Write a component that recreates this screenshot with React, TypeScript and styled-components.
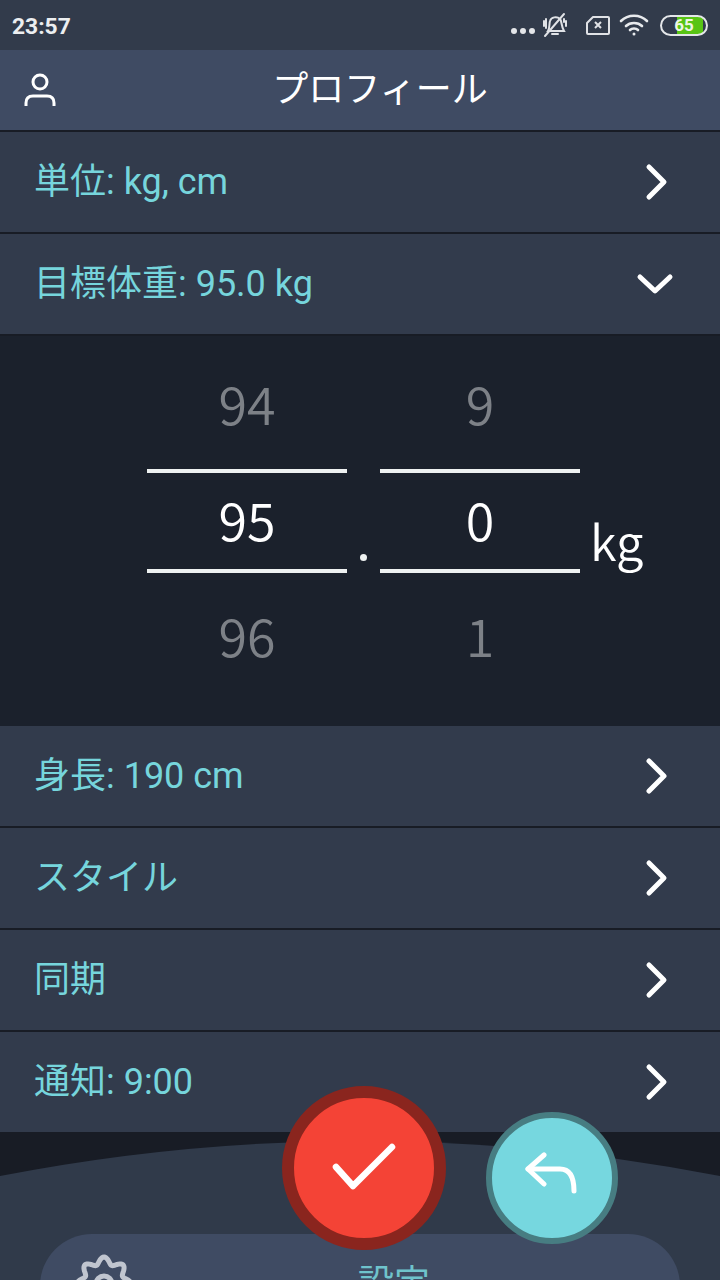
import React from 'react';
import styled, { createGlobalStyle } from 'styled-components';

const GlobalStyle = createGlobalStyle`
  html, body {
    margin: 0;
    padding: 0;
    background: #181c25;
  }
  * { box-sizing: border-box; }
`;

const Page = styled.div`
  width: 720px;
  height: 1280px;
  overflow: hidden;
  display: flex;
  flex-direction: column;
  background: #181c25;
  font-family: 'Noto Sans CJK JP', 'Noto Sans', sans-serif;
`;

const StatusBar = styled.div`
  height: 50px;
  background: #323b4b;
  display: flex;
  align-items: center;
  justify-content: space-between;
  padding: 0 12px;
`;

const Clock = styled.span`
  font: 700 22.8px 'Roboto', sans-serif;
  color: #eceef0;
  padding-top: 2px;
`;

const StatusIcons = styled.div`
  display: flex;
  align-items: center;
  gap: 7px;
`;

const Dots = styled.div`
  display: flex;
  gap: 3px;
  margin-top: 11px;
  i {
    width: 6px;
    height: 6px;
    border-radius: 50%;
    background: #e4e6e9;
  }
`;

const Battery = styled.div`
  width: 48px;
  height: 21px;
  margin-left: 4px;
  border: 2px solid #e4e6e9;
  border-radius: 11px;
  overflow: hidden;
  display: flex;
  align-items: center;
  justify-content: center;
  font: 700 17px 'Roboto', sans-serif;
  color: #eef5e6;
  background: linear-gradient(90deg, transparent 0 15px, #58c414 15px 41px, transparent 41px);
`;

const Header = styled.header`
  height: 82px;
  background: #3f4b63;
  border-bottom: 2px solid #181c25;
  display: flex;
  align-items: center;
  justify-content: center;
  position: relative;
`;

const Title = styled.h1`
  margin: 0;
  padding: 0 0 8px 40px;
  font-size: 36px;
  font-weight: 400;
  color: #fff;
`;

const ProfileButton = styled.div`
  position: absolute;
  left: 24px;
  top: 22px;
  display: flex;
`;

const Row = styled.div`
  height: 102px;
  background: #323b4c;
  border-bottom: 2px solid #181c25;
  display: flex;
  align-items: center;
  justify-content: space-between;
  padding: 0 46px 0 34px;

  &:last-of-type {
    height: 100px;
    border-bottom: 0;
  }
`;

const RowLabel = styled.span`
  padding-bottom: 8px;
  font-family: 'Roboto', 'Noto Sans CJK JP', sans-serif;
  font-size: 36px;
  font-weight: 400;
  color: #76d5dc;
`;

const Picker = styled.div`
  height: 390px;
  background: #1b212c;
  display: flex;
  padding-left: 147px;
`;

const Wheel = styled.div`
  width: 200px;
  display: flex;
  flex-direction: column;
  padding-top: 17px;
`;

const WheelItem = styled.div<{ $active?: boolean }>`
  height: ${(p) => (p.$active ? 104 : 116)}px;
  display: flex;
  align-items: center;
  justify-content: center;
  font-size: 52px;
  font-weight: 350;
  color: ${(p) => (p.$active ? '#fff' : '#7d8187')};
  border-style: solid;
  border-color: #eef1f1;
  border-width: ${(p) => (p.$active ? '4px 0' : 0)};
  padding-bottom: ${(p) => (p.$active ? 6 : 0)}px;

  &:first-child {
    padding-bottom: 18px;
  }
  &:last-child {
    padding-top: 6px;
  }
`;

const Separator = styled.div`
  width: 33px;
  display: flex;
  justify-content: center;
  padding-top: 218px;
  i {
    width: 7px;
    height: 7px;
    border-radius: 50%;
    background: #eef1f1;
  }
`;

const Unit = styled.div`
  margin-left: 10px;
  padding-top: 168px;
  font-size: 49px;
  font-weight: 350;
  line-height: 72px;
  color: #fff;
`;

const Bottom = styled.section`
  position: relative;
  flex: 1;
`;

const Arc = styled.svg`
  position: absolute;
  left: 0;
  top: 0;
`;

const NavCard = styled.nav`
  position: absolute;
  left: 40px;
  top: 102px;
  width: 640px;
  height: 120px;
  background: #3f4b63;
  border-radius: 52px 52px 0 0;
`;

const NavIcon = styled.div`
  position: absolute;
  left: 34px;
  top: 20px;
  display: flex;
`;

const NavLabel = styled.span`
  position: absolute;
  left: 318px;
  top: 20px;
  font-size: 36px;
  line-height: 52px;
  color: #6fc3cc;
`;

const RoundButton = styled.button<{ $size: number; $ring: number; $fill: string; $edge: string; $left: number; $top: number }>`
  position: absolute;
  left: ${(p) => p.$left}px;
  top: ${(p) => p.$top}px;
  width: ${(p) => p.$size}px;
  height: ${(p) => p.$size}px;
  padding: 0;
  border-radius: 50%;
  border: ${(p) => p.$ring}px solid ${(p) => p.$edge};
  background: ${(p) => p.$fill};
  display: flex;
  align-items: center;
  justify-content: center;
`;

const ChevronRight = styled.svg`
  margin-right: 6px;
`;

const Chevron = ({ down }: { down?: boolean }) =>
  down ? (
    <svg width="38" height="24" viewBox="0 0 38 24" fill="none" stroke="#fff" strokeWidth="5" strokeLinecap="round" strokeLinejoin="round">
      <path d="M4 5 L19 19 L34 5" />
    </svg>
  ) : (
    <ChevronRight width="24" height="38" viewBox="0 0 24 38" fill="none" stroke="#fff" strokeWidth="5" strokeLinecap="round" strokeLinejoin="round">
      <path d="M5 4 L20 19 L5 34" />
    </ChevronRight>
  );

// 8-lobed gear outline, r = R + a*cos(8t)
const gearPath = (() => {
  const pts: string[] = [];
  for (let i = 0; i < 160; i++) {
    const t = (i / 160) * Math.PI * 2;
    const r = 23.5 + 3.5 * Math.cos(8 * t);
    const x = 30 + r * Math.sin(t);
    const y = 30 - r * Math.cos(t);
    pts.push(`${x.toFixed(2)} ${y.toFixed(2)}`);
  }
  return `M${pts.join(' L')} Z`;
})();

const rowsTop = ['単位: kg, cm', '目標体重: 95.0 kg'];
const rowsBottom = ['身長: 190 cm', 'スタイル', '同期', '通知: 9:00'];

export default function App() {
  return (
    <Page>
      <GlobalStyle />
      <StatusBar>
        <Clock>23:57</Clock>
        <StatusIcons>
          <Dots><i /><i /><i /></Dots>
          <svg width="26" height="26" viewBox="0 0 26 26" fill="none" stroke="#e0e2e6" strokeWidth="2" strokeLinecap="round">
            <path d="M6 19 C8 16 7 12 8 9 C9 5 15 4 18 7 C20 9 19 14 22 19 Z" />
            <path d="M10 22 H16" />
            <path d="M3 24 L22 2" />
            <path d="M2 9 V14 M4 7 V16 M24 9 V14 M22 7 V10" />
          </svg>
          <svg width="24" height="19" viewBox="0 0 24 19" fill="none" stroke="#e0e2e6" strokeWidth="2" strokeLinejoin="round" style={{ marginLeft: 11 }}>
            <path d="M7 1 H22 Q23 1 23 2 V17 Q23 18 22 18 H2 Q1 18 1 17 V7 Z" />
            <path d="M9 6 L15 12 M15 6 L9 12" />
          </svg>
          <svg width="30" height="22" viewBox="0 0 30 22" fill="none" stroke="#e8eaed" strokeWidth="2.6" strokeLinecap="round" style={{ marginLeft: 2 }}>
            <path d="M2 7 C9 0 21 0 28 7" />
            <path d="M7 12 C11 8 19 8 23 12" />
            <path d="M11 16 C13 14 17 14 19 16" />
            <circle cx="15" cy="20" r="1.5" fill="#e8eaed" stroke="none" />
          </svg>
          <Battery>65</Battery>
        </StatusIcons>
      </StatusBar>

      <Header>
        <ProfileButton>
          <svg width="32" height="36" viewBox="0 0 32 36" fill="none" stroke="#fff" strokeWidth="3">
            <circle cx="16" cy="10" r="7" />
            <path d="M2 34 V31 C2 26 5 24 9 24 H23 C27 24 30 26 30 31 V34" />
          </svg>
        </ProfileButton>
        <Title>プロフィール</Title>
      </Header>

      {rowsTop.map((label, i) => (
        <Row key={label}>
          <RowLabel>{label}</RowLabel>
          <Chevron down={i === 1} />
        </Row>
      ))}

      <Picker>
        <Wheel>
          <WheelItem>94</WheelItem>
          <WheelItem $active>95</WheelItem>
          <WheelItem>96</WheelItem>
        </Wheel>
        <Separator><i /></Separator>
        <Wheel>
          <WheelItem>9</WheelItem>
          <WheelItem $active>0</WheelItem>
          <WheelItem>1</WheelItem>
        </Wheel>
        <Unit>kg</Unit>
      </Picker>

      {rowsBottom.map((label) => (
        <Row key={label}>
          <RowLabel>{label}</RowLabel>
          <Chevron />
        </Row>
      ))}

      <Bottom>
        <Arc width="720" height="148" viewBox="0 0 720 148">
          <path d="M0 44 Q360 -26 720 44 V148 H0 Z" fill="#303a4a" />
        </Arc>
        <NavCard>
          <NavIcon>
            <svg width="60" height="60" viewBox="0 0 60 60" fill="none" stroke="#c0c5cf" strokeWidth="5">
              <path d={gearPath} />
              <circle cx="30" cy="30" r="8" />
            </svg>
          </NavIcon>
          <NavLabel>設定</NavLabel>
        </NavCard>
        <RoundButton $left={282} $top={-46} $size={164} $ring={12} $fill="#f44336" $edge="#8a251e">
          <svg width="66" height="52" viewBox="0 0 66 52" fill="none" stroke="#fff" strokeWidth="6.5" strokeLinecap="round" strokeLinejoin="round">
            <path d="M5 25 L22 44 L61 5" />
          </svg>
        </RoundButton>
        <RoundButton $left={486} $top={-20} $size={132} $ring={6} $fill="#76d7df" $edge="#477d82">
          <svg width="56" height="52" viewBox="0 0 56 52" fill="none" stroke="#fff" strokeWidth="5" strokeLinecap="round" strokeLinejoin="round">
            <path d="M20 3 L4 17 L20 32" />
            <path d="M4 17 H36 C45 17 50 24 50 39" />
          </svg>
        </RoundButton>
      </Bottom>
    </Page>
  );
}
